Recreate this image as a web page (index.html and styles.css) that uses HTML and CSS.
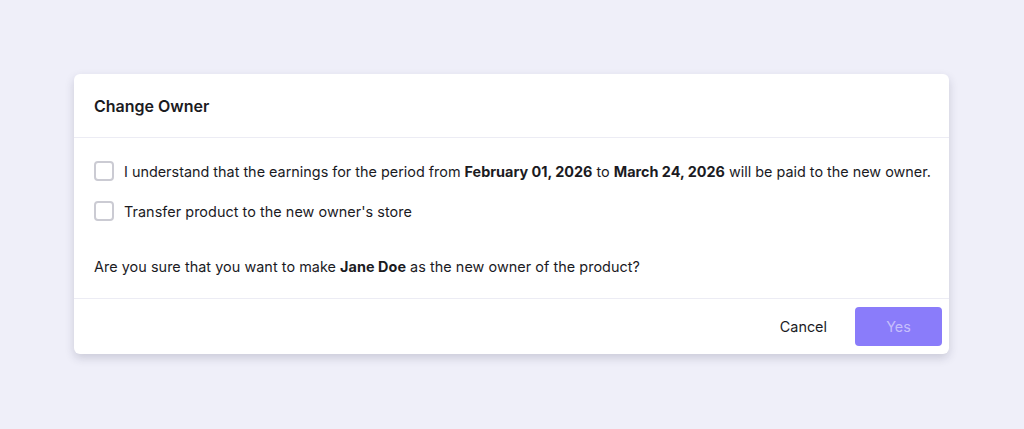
FILE: index.html
```html
<!DOCTYPE html>
<html>
<head>
<meta charset="utf-8">
<link rel="stylesheet" href="styles.css">
</head>
<body>
<div class="modal">
  <div class="modal-header">Change Owner</div>
  <div class="modal-body">
    <div class="checks">
      <label class="check-row"><span class="box"></span><span class="label-text tight">I understand that the earnings for the period from <b>February 01, 2026</b> to <b>March 24, 2026</b> will be paid to the new owner.</span></label>
      <label class="check-row"><span class="box"></span><span class="label-text">Transfer product to the new owner's store</span></label>
    </div>
    <p class="question">Are you sure that you want to make <b>Jane Doe</b> as the new owner of the product?</p>
  </div>
  <div class="modal-footer">
    <button class="btn-cancel">Cancel</button>
    <button class="btn-yes">Yes</button>
  </div>
</div>
</body>
</html>
```
FILE: styles.css
```css
html, body { margin: 0; padding: 0; }
body {
  background: #efeff9;
  font-family: Inter, "Noto Sans", sans-serif;
  color: #1b1b1f;
  width: 1024px;
  height: 429px;
  overflow: hidden;
}
.modal {
  margin: 74px 0 0 74px;
  width: 875px;
  background: #fff;
  border-radius: 6px;
  box-shadow: 0 4px 10px rgba(40, 40, 70, 0.18);
}
.modal-header {
  height: 64px;
  display: flex;
  align-items: center;
  padding: 0 20px;
  font-size: 16px;
  font-weight: 600;
  border-bottom: 1px solid #ececf4;
  box-sizing: border-box;
}
.modal-body {
  padding: 23px 16px 20px 20px;
  font-size: 14.4px;
  letter-spacing: 0.05px;
}
.checks { display: flex; flex-direction: column; gap: 20px; }
.check-row {
  display: flex;
  align-items: center;
  gap: 10px;
  height: 20px;
}
.label-text { white-space: nowrap; }
.tight { letter-spacing: 0; }
.box {
  width: 20px;
  height: 20px;
  box-sizing: border-box;
  border: 2px solid #cbcbd3;
  border-radius: 4px;
  flex: none;
}
b { font-weight: 700; }
.question { margin: 35px 0 0; line-height: 22px; }
.modal-footer {
  border-top: 1px solid #ececf4;
  display: flex;
  justify-content: flex-end;
  align-items: center;
  padding: 8px 7px 8px;
  gap: 6px;
}
button {
  font-family: inherit;
  font-size: 14.4px;
  border: none;
  cursor: pointer;
}
.btn-cancel {
  background: transparent;
  color: #1b1b1f;
  padding: 0 22px;
  height: 39px;
}
.btn-yes {
  background: #8a7cfa;
  color: #c6bffc;
  width: 87px;
  height: 39px;
  border-radius: 4px;
}
```
